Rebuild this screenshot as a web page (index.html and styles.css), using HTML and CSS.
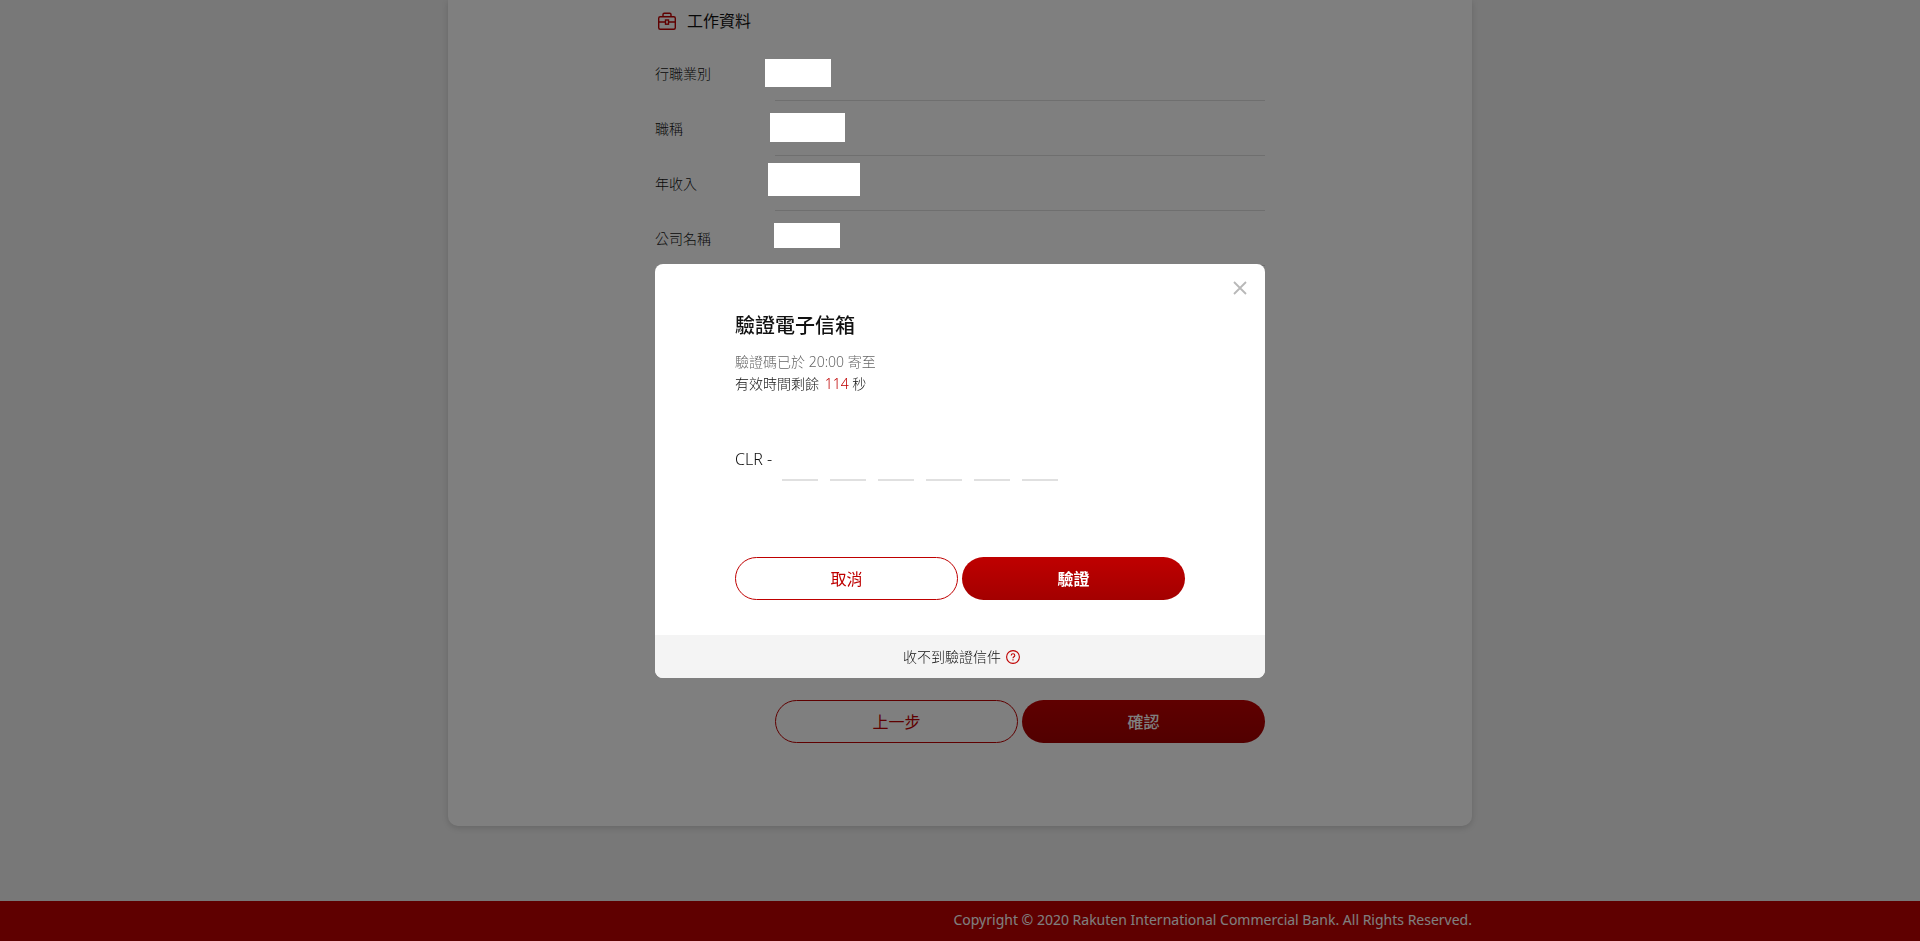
FILE: index.html
```html
<!DOCTYPE html>
<html lang="zh-Hant">
<head>
<meta charset="utf-8">
<meta name="viewport" content="width=device-width, initial-scale=1">
<title>驗證電子信箱</title>
<link rel="stylesheet" href="styles.css">
</head>
<body>
<div class="page">
  <main class="card">
    <div class="column">
      <h2 class="section-title">
        <svg class="section-icon" viewBox="0 0 20 20" aria-hidden="true">
          <rect x="1.700" y="5.700" width="16.600" height="12.600" rx="1.500"/>
          <path d="M6 5.700V3.400c0-.8.4-1.200 1.200-1.200h5.600c.8 0 1.200.4 1.200 1.200v2.300M1.700 11h6.800M11.500 11h6.800"/>
          <rect x="8.500" y="9" width="3" height="4.200"/>
        </svg>
        工作資料
      </h2>
      <dl class="fields">
        <div class="field"><dt class="field-label">行職業別</dt><dd class="field-value"><span class="mask mask-industry"></span></dd></div>
        <div class="field"><dt class="field-label">職稱</dt><dd class="field-value"><span class="mask mask-title"></span></dd></div>
        <div class="field"><dt class="field-label">年收入</dt><dd class="field-value"><span class="mask mask-income"></span></dd></div>
        <div class="field"><dt class="field-label">公司名稱</dt><dd class="field-value"><span class="mask mask-company"></span></dd></div>
      </dl>
      <div class="actions page-actions">
        <button type="button" class="btn btn-outline">上一步</button>
        <button type="button" class="btn btn-solid">確認</button>
      </div>
    </div>
  </main>
  <footer class="footer"><p class="copyright">Copyright © 2020 Rakuten International Commercial Bank. All Rights Reserved.</p></footer>
</div>

<div class="overlay">
  <section class="dialog" role="dialog" aria-modal="true" aria-labelledby="dialog-title">
    <button type="button" class="close" aria-label="關閉">
      <svg class="close-icon" viewBox="0 0 14 14" aria-hidden="true"><path d="M1 1l12 12M13 1L1 13"/></svg>
    </button>
    <form class="dialog-body">
      <h1 class="dialog-title" id="dialog-title">驗證電子信箱</h1>
      <p class="note note-muted">驗證碼已於 20:00 寄至</p>
      <p class="note">有效時間剩餘 <span class="seconds">114</span> 秒</p>
      <div class="code">
        <span class="code-prefix">CLR -</span>
        <div class="digits">
          <input class="digit" type="text" maxlength="1" aria-label="驗證碼第 1 碼">
          <input class="digit" type="text" maxlength="1" aria-label="驗證碼第 2 碼">
          <input class="digit" type="text" maxlength="1" aria-label="驗證碼第 3 碼">
          <input class="digit" type="text" maxlength="1" aria-label="驗證碼第 4 碼">
          <input class="digit" type="text" maxlength="1" aria-label="驗證碼第 5 碼">
          <input class="digit" type="text" maxlength="1" aria-label="驗證碼第 6 碼">
        </div>
      </div>
      <div class="actions">
        <button type="button" class="btn btn-outline">取消</button>
        <button type="submit" class="btn btn-solid btn-strong">驗證</button>
      </div>
    </form>
    <div class="dialog-footer">
      <a class="help" href="#">收不到驗證信件
        <svg class="help-icon" viewBox="0 0 14 14" aria-hidden="true"><circle cx="7" cy="7" r="6.400"/><path d="M5.200 5.600c0-1.200.7-1.900 1.800-1.900s1.800.7 1.800 1.700c0 1.300-1.800 1.400-1.800 2.800M7 9.300v1.200"/></svg>
      </a>
    </div>
  </section>
</div>
</body>
</html>
```
FILE: styles.css
```css
* {
  box-sizing: border-box;
}

body,
h1,
h2,
p,
dl,
dd {
  margin: 0;
}

body {
  background: #f0f0f0;
  color: #111;
  font-family: "Noto Sans", "Noto Sans CJK TC", sans-serif;
  font-size: 14px;
  font-weight: 300;
  line-height: 22px;
}

button,
input {
  font: inherit;
}

.page {
  display: flex;
  flex-direction: column;
  min-height: 100vh;
}

.card {
  flex: 1;
  display: flex;
  justify-content: center;
  width: 100%;
  max-width: 1024px;
  margin: 0 auto 75px;
  padding-bottom: 83px;
  background: #fff;
  border-radius: 0 0 10px 10px;
  box-shadow: 0 2px 6px rgba(0, 0, 0, 0.15);
}

.column {
  display: flex;
  flex-direction: column;
  width: 100%;
  max-width: 610px;
}

.section-title {
  display: flex;
  align-items: center;
  gap: 10px;
  height: 46px;
  padding: 0 2px 5px;
  font-size: 16px;
  font-weight: 400;
}

.section-icon {
  width: 20px;
  height: 20px;
  fill: none;
  stroke: #bf0000;
  stroke-width: 1.4;
}

.field {
  display: grid;
  grid-template-columns: 120px 1fr;
  height: 55px;
}

.field-label {
  line-height: 55px;
}

.field-value {
  position: relative;
  border-bottom: 1px solid #dedede;
}

/* Blocks that cover personal data, drawn above the overlay */
.mask {
  position: absolute;
  z-index: 20;
  background: #fff;
}

.mask-industry {
  top: 13px;
  left: -10px;
  width: 66px;
  height: 28px;
}

.mask-title {
  top: 12px;
  left: -5px;
  width: 75px;
  height: 29px;
}

.mask-income {
  top: 7px;
  left: -7px;
  width: 92px;
  height: 33px;
}

.mask-company {
  top: 12px;
  left: -1px;
  width: 66px;
  height: 25px;
}

.actions {
  display: grid;
  grid-template-columns: 1fr 1fr;
  gap: 4px;
}

.page-actions {
  margin-top: auto;
  margin-left: 120px;
}

.btn {
  height: 43px;
  padding: 0;
  border: 1px solid #bf0000;
  border-radius: 22px;
  font-size: 16px;
  font-weight: 400;
  cursor: pointer;
}

.btn-outline {
  background: transparent;
  color: #bf0000;
}

.btn-solid {
  border: 0;
  background: linear-gradient(#bf0000, #a30000);
  color: #fff;
  font-weight: 500;
}

.btn-strong {
  font-weight: 700;
}

.footer {
  height: 40px;
  background: #bf0000;
  color: #fff;
}

.copyright {
  max-width: 1024px;
  margin: 0 auto;
  font-weight: 400;
  line-height: 38px;
  text-align: right;
}

.overlay {
  position: fixed;
  inset: 0;
  z-index: 10;
  display: flex;
  align-items: center;
  justify-content: center;
  padding-top: 1px;
  background: rgba(0, 0, 0, 0.5);
}

.dialog {
  position: relative;
  width: 100%;
  max-width: 610px;
  overflow: hidden;
  border-radius: 8px;
  background: #fff;
}

.close {
  position: absolute;
  top: 12px;
  right: 13px;
  display: flex;
  align-items: center;
  justify-content: center;
  width: 24px;
  height: 24px;
  padding: 0;
  border: 0;
  background: none;
  cursor: pointer;
}

.close-icon {
  width: 14px;
  height: 14px;
  fill: none;
  stroke: #b8b8b8;
  stroke-width: 1.8;
}

.dialog-body {
  padding: 47px 80px 35px;
}

.dialog-title {
  margin-bottom: 10px;
  font-size: 20px;
  font-weight: 500;
  line-height: 30px;
}

.note-muted {
  color: #666;
}

.seconds {
  padding-left: 2px;
  color: #bf0000;
}

.code {
  display: flex;
  gap: 10px;
  margin: 49px 0 76px;
}

.code-prefix {
  font-size: 16px;
  line-height: 30px;
}

.digits {
  display: flex;
  gap: 12px;
}

.digit {
  width: 36px;
  height: 37px;
  padding: 0;
  border: 0;
  border-bottom: 2px solid #e0e0e0;
  border-radius: 0;
  background: transparent;
  font-size: 16px;
  text-align: center;
}

.dialog-footer {
  display: flex;
  justify-content: center;
  height: 43px;
  padding-left: 3px;
  background: #f4f4f4;
}

.help {
  display: flex;
  align-items: center;
  gap: 5px;
  color: #111;
  text-decoration: none;
}

.help-icon {
  width: 14px;
  height: 14px;
  fill: none;
  stroke: #bf0000;
  stroke-width: 1.1;
}
```
